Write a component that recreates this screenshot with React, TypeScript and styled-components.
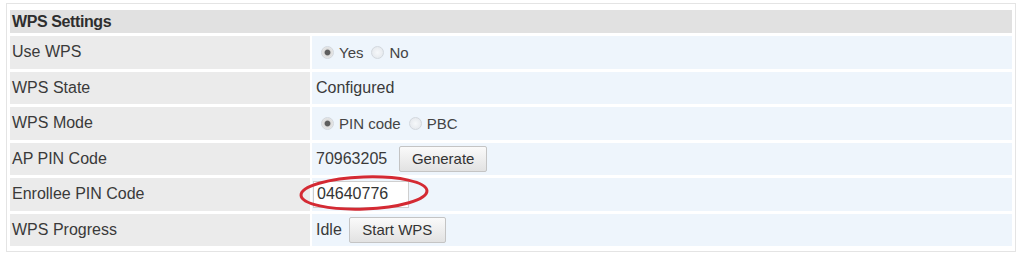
import React from 'react';
import styled, { createGlobalStyle } from 'styled-components';

const GlobalStyle = createGlobalStyle`
  html, body {
    margin: 0;
    padding: 0;
    background: #ffffff;
  }
  body {
    font-family: 'Liberation Sans', Arial, sans-serif;
    color: #333333;
  }
`;

const Page = styled.div`
  width: 1020px;
  height: 256px;
  padding: 3px 4px 0 6px;
  box-sizing: border-box;
  overflow: hidden;
`;

const Frame = styled.div`
  border: 1px solid #e4e4e4;
  padding: 6px 3px 3px 3px;
  box-sizing: border-box;
  height: 249px;
`;

const Table = styled.div`
  display: grid;
  grid-template-columns: 300px 1fr;
  grid-template-rows: 23px repeat(6, 32.5px);
  row-gap: 3px;
  column-gap: 2px;
`;

const Header = styled.div`
  grid-column: 1 / span 2;
  background: #e1e1e1;
  font-weight: bold;
  font-size: 16px;
  color: #2e2e2e;
  display: flex;
  align-items: center;
  padding-left: 2px;
  letter-spacing: -0.4px;
`;

const Label = styled.div`
  background: #ebebeb;
  font-size: 16px;
  display: flex;
  align-items: center;
  padding-left: 2px;
  color: #3a3a3a;
`;

const Value = styled.div`
  background: #eef5fc;
  font-size: 16px;
  display: flex;
  align-items: center;
  padding-left: 4px;
  gap: 7px;
  color: #3a3a3a;
  position: relative;
`;

const RadioGroup = styled.div`
  display: flex;
  align-items: center;
  gap: 8px;
  padding-left: 5px;
`;

const RadioLabel = styled.label`
  display: inline-flex;
  align-items: center;
  gap: 5px;
  font-size: 15px;
  color: #444;
`;

const RadioDot = styled.span<{ checked?: boolean }>`
  width: 13px;
  height: 13px;
  border-radius: 50%;
  box-sizing: border-box;
  border: 1px solid #d3d8de;
  background: ${p =>
    p.checked
      ? 'radial-gradient(circle, #5e5e5e 0 2.4px, #dcdcdc 3.4px, #f2f2f2 100%)'
      : 'radial-gradient(circle, #f6f8fa 0, #e1e5ea 100%)'};
`;

const Button = styled.button<{ wide?: number }>`
  font-family: 'Liberation Sans', Arial, sans-serif;
  font-size: 15px;
  color: #333;
  height: 26px;
  width: ${p => p.wide ?? 88}px;
  padding: 0;
  border: 1px solid #c4c4c4;
  border-radius: 2px;
  background: linear-gradient(#fafafa, #e2e2e2);
`;

const PinInput = styled.input`
  font-family: 'Liberation Sans', Arial, sans-serif;
  font-size: 16px;
  color: #333;
  width: 96px;
  height: 27px;
  box-sizing: border-box;
  border: 1px solid #cfcfcf;
  background: #fff;
  padding: 0 3px;
  margin-left: -3px;
`;

const Circle = styled.svg`
  position: absolute;
  left: -16px;
  top: -6px;
  pointer-events: none;
`;

const Radio = ({ checked, text }: { checked?: boolean; text: string }) => (
  <RadioLabel>
    <RadioDot checked={checked} />
    {text}
  </RadioLabel>
);

const App = () => {
  return (
    <>
      <GlobalStyle />
      <Page>
        <Frame>
          <Table>
            <Header>WPS Settings</Header>
            <Label>Use WPS</Label>
            <Value>
              <RadioGroup>
                <Radio checked text='Yes' />
                <Radio text='No' />
              </RadioGroup>
            </Value>
            <Label>WPS State</Label>
            <Value>Configured</Value>
            <Label>WPS Mode</Label>
            <Value>
              <RadioGroup>
                <Radio checked text='PIN code' />
                <Radio text='PBC' />
              </RadioGroup>
            </Value>
            <Label>AP PIN Code</Label>
            <Value>
              <span>70963205</span>
              <Button wide={88} style={{ marginLeft: 5 }}>Generate</Button>
            </Value>
            <Label>Enrollee PIN Code</Label>
            <Value>
              <PinInput defaultValue='04640776' />
              <Circle width='136' height='42' viewBox='0 0 136 42'>
                <ellipse
                  cx='68'
                  cy='21'
                  rx='63'
                  ry='16'
                  fill='none'
                  stroke='#d42a33'
                  strokeWidth='3'
                  transform='rotate(-2 68 21)'
                />
              </Circle>
            </Value>
            <Label>WPS Progress</Label>
            <Value>
              <span>Idle</span>
              <Button wide={97}>Start WPS</Button>
            </Value>
          </Table>
        </Frame>
      </Page>
    </>
  );
};

export default App;
